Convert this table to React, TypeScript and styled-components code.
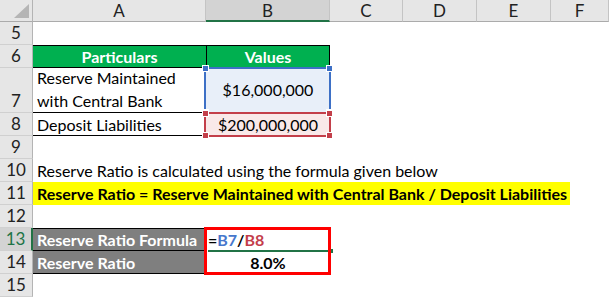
import styled, { createGlobalStyle } from "styled-components";

const GlobalStyle = createGlobalStyle`
  html, body {
    margin: 0;
    padding: 0;
    background: #ffffff;
  }
  body {
    font-family: Lato, "Open Sans", sans-serif;
  }
`;

const columns = ["A", "B", "C", "D", "E", "F"];

const App = () => {
    return (
        <>
            <GlobalStyle />
            <Sheet>
                {/* 헤더 */}
                <Corner>
                    <Triangle />
                </Corner>
                {columns.map((c) => (
                    <ColHead key={c} $active={c === "B"}>
                        {c}
                    </ColHead>
                ))}

                {/* 5 */}
                <RowHead>5</RowHead>
                <Cell $span={6} />

                {/* 6 */}
                <RowHead>6</RowHead>
                <Cell $fill="#00b050" $align="center" $bold $color="#fff" $lines="tb">
                    Particulars
                </Cell>
                <Cell $fill="#00b050" $align="center" $bold $color="#fff" $lines="tlr">
                    Values
                </Cell>
                <Cell $span={4} />

                {/* 7 */}
                <RowHead>7</RowHead>
                <Cell $lines="b" $wrap>
                    Reserve Maintained
                    <br />
                    with Central Bank
                </Cell>
                <Cell $fill="#e8eff9" $align="center" $middle>
                    $16,000,000
                    <RefBox $color="#3d70c6">
                        <Handle $color="#3d70c6" $pos="tl" />
                        <Handle $color="#3d70c6" $pos="tr" />
                        <Handle $color="#3d70c6" $pos="bl" />
                        <Handle $color="#3d70c6" $pos="br" />
                    </RefBox>
                </Cell>
                <Cell $span={4} />

                {/* 8 */}
                <RowHead>8</RowHead>
                <Cell $lines="b">Deposit Liabilities</Cell>
                <Cell $fill="#f9e9e9" $align="center">
                    $200,000,000
                    <RefBox $color="#c33f4a">
                        <Handle $color="#c33f4a" $pos="tl" />
                        <Handle $color="#c33f4a" $pos="tr" />
                        <Handle $color="#c33f4a" $pos="bl" />
                        <Handle $color="#c33f4a" $pos="br" />
                    </RefBox>
                </Cell>
                <Cell $span={4} />

                {/* 9 */}
                <RowHead>9</RowHead>
                <Cell $span={6} />

                {/* 10 */}
                <RowHead>10</RowHead>
                <Cell $span={6}>
                    Reserve Ratio is calculated using the formula given below
                </Cell>

                {/* 11 */}
                <RowHead>11</RowHead>
                <Cell $span={6}>
                    <Highlight>
                        Reserve Ratio = Reserve Maintained with Central Bank /
                        Deposit Liabilities
                    </Highlight>
                </Cell>

                {/* 12 */}
                <RowHead>12</RowHead>
                <Cell $span={6} />

                {/* 13 */}
                <RowHead $active>13</RowHead>
                <Cell $fill="#7f7f7f" $bold $color="#fff" $lines="tb">
                    Reserve Ratio Formula
                </Cell>
                <Cell $bold $pad={2}>
                    =<Ref $color="#4677cc">B7</Ref>/<Ref $color="#c43d4b">B8</Ref>
                    <ActiveLine>
                        <ActiveDot />
                    </ActiveLine>
                    <ResultBox />
                </Cell>
                <Cell $span={4} />

                {/* 14 */}
                <RowHead>14</RowHead>
                <Cell $fill="#7f7f7f" $bold $color="#fff" $lines="b">
                    Reserve Ratio
                </Cell>
                <Cell $bold $align="center">
                    8.0%
                </Cell>
                <Cell $span={4} />

                {/* 15 */}
                <RowHead>15</RowHead>
                <Cell $span={6} />
            </Sheet>
        </>
    );
};

export default App;

const Sheet = styled.div`
    display: grid;
    grid-template-columns: 33px 173px 124px 73px 74px 74px 1fr;
    grid-template-rows: 22px 23px 23px 45px repeat(8, 23px);
    width: 609px;
    height: 298px;
    overflow: hidden;
    font-size: 16px;
    color: #000;
`;

const Corner = styled.div`
    position: relative;
    background: #e6e6e6;
    border-right: 1px solid #b4b4b4;
    border-bottom: 1px solid #ababab;
    box-sizing: border-box;
`;

const Triangle = styled.div`
    position: absolute;
    right: 3px;
    bottom: 3px;
    width: 15px;
    height: 14px;
    background: #b5b5b5;
    clip-path: polygon(100% 0, 100% 100%, 0 100%);
`;

const ColHead = styled.div<{ $active?: boolean }>`
    display: flex;
    align-items: center;
    justify-content: center;
    box-sizing: border-box;
    background: ${(p) => (p.$active ? "#d3d3d3" : "#e6e6e6")};
    border-right: 1px solid #c4c4c4;
    border-bottom: ${(p) => (p.$active ? "2px solid #217346" : "1px solid #ababab")};
    color: #222;
    font-size: 17px;
    padding-top: ${(p) => (p.$active ? "1px" : "0")};
`;

const RowHead = styled.div<{ $active?: boolean }>`
    display: flex;
    align-items: flex-end;
    justify-content: center;
    box-sizing: border-box;
    padding-bottom: 1px;
    background: ${(p) => (p.$active ? "#d3d3d3" : "#e6e6e6")};
    border-bottom: 1px solid #d0d0d0;
    border-right: ${(p) => (p.$active ? "2px solid #217346" : "1px solid #b4b4b4")};
    color: ${(p) => (p.$active ? "#217346" : "#222")};
    font-size: 17px;
    line-height: 20px;
`;

const lineShadow = (lines?: string) => {
    if (!lines) return "none";
    const out: string[] = [];
    if (lines.includes("t")) out.push("inset 0 1px 0 #000");
    if (lines.includes("b")) out.push("inset 0 -1px 0 #000");
    if (lines.includes("l")) out.push("inset 1px 0 0 #000");
    if (lines.includes("r")) out.push("inset -1px 0 0 #000");
    return out.join(", ");
};

const Cell = styled.div<{
    $span?: number;
    $fill?: string;
    $align?: "left" | "center";
    $bold?: boolean;
    $color?: string;
    $lines?: string;
    $wrap?: boolean;
    $middle?: boolean;
    $pad?: number;
}>`
    position: relative;
    grid-column: span ${(p) => p.$span ?? 1};
    display: flex;
    flex-direction: ${(p) => (p.$wrap ? "column" : "row")};
    align-items: ${(p) => (p.$wrap ? "flex-start" : p.$middle ? "center" : "flex-end")};
    justify-content: ${(p) =>
        p.$wrap ? "flex-end" : p.$align === "center" ? "center" : "flex-start"};
    box-sizing: border-box;
    padding: 0 4px 1px ${(p) => p.$pad ?? 4}px;
    background: ${(p) => p.$fill ?? "transparent"};
    color: ${(p) => p.$color ?? "#000"};
    font-weight: ${(p) => (p.$bold ? 700 : 400)};
    line-height: ${(p) => (p.$wrap ? "23px" : "20px")};
    white-space: ${(p) => (p.$wrap ? "normal" : "nowrap")};
    box-shadow: ${(p) => lineShadow(p.$lines)};
`;

const Highlight = styled.div`
    width: 537px;
    height: 23px;
    margin: 0 -4px -1px;
    padding: 1px 4px 0;
    box-sizing: border-box;
    background: #ffff00;
    font-weight: 700;
    line-height: 22px;
`;

const RefBox = styled.div<{ $color: string }>`
    position: absolute;
    top: -1px;
    left: -2px;
    right: -1px;
    bottom: -1px;
    border: 2px solid ${(p) => p.$color};
    pointer-events: none;
    z-index: 2;
`;

const Handle = styled.span<{ $color: string; $pos: "tl" | "tr" | "bl" | "br" }>`
    position: absolute;
    width: 5px;
    height: 5px;
    background: ${(p) => p.$color};
    border: 1px solid #fff;
    ${(p) => (p.$pos[0] === "t" ? "top: -4px;" : "bottom: -4px;")}
    ${(p) => (p.$pos[1] === "l" ? "left: -4px;" : "right: -4px;")}
`;

const Ref = styled.span<{ $color: string }>`
    color: ${(p) => p.$color};
`;

const ActiveLine = styled.div`
    position: absolute;
    left: 2px;
    right: 0;
    bottom: -1px;
    height: 2px;
    background: #217346;
    z-index: 2;
`;

const ActiveDot = styled.span`
    position: absolute;
    right: -3px;
    top: -1px;
    width: 4px;
    height: 4px;
    background: #217346;
`;

const ResultBox = styled.div`
    position: absolute;
    top: -1px;
    left: -2px;
    width: 127px;
    height: 48px;
    box-sizing: border-box;
    border: 3px solid #ff0000;
    pointer-events: none;
    z-index: 3;
`;
